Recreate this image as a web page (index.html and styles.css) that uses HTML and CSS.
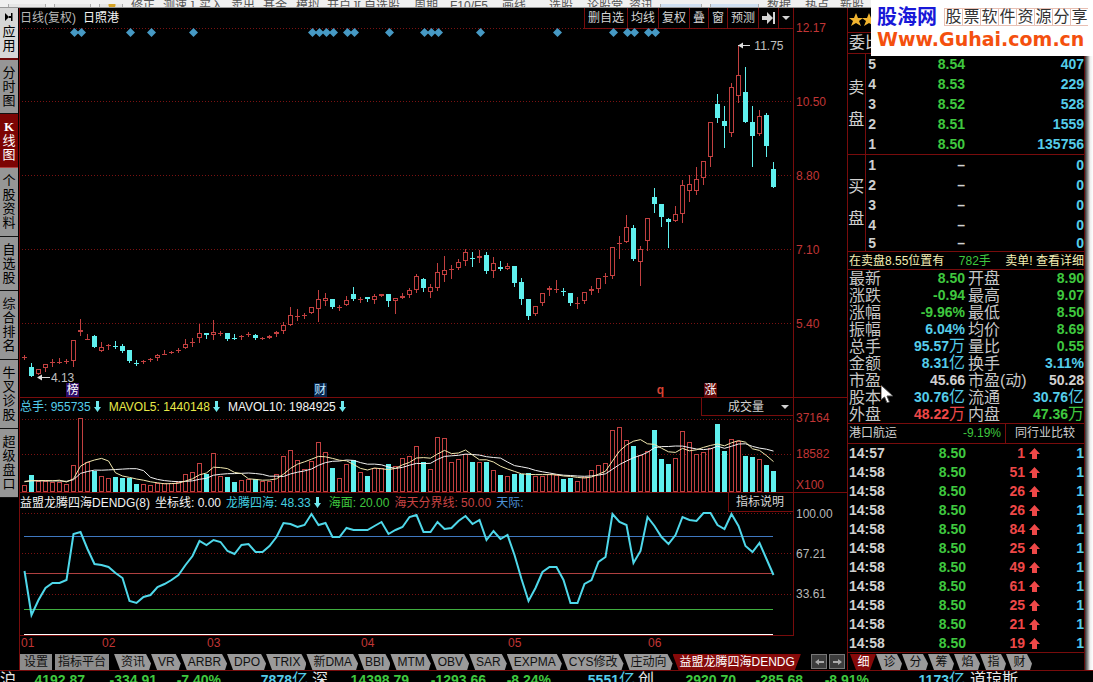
FILE: index.html
```
<!DOCTYPE html>
<html lang="zh-CN">
<head>
<meta charset="utf-8">
<title>日照港 日线</title>
<link rel="stylesheet" href="styles.css">
</head>
<body>
<nav class="toolbar">
  <i class="slot"></i><i class="slot"></i><i class="slot coin"></i>
  <span>修正</span><span>测速</span><b>]</b><span>买入</span><span>卖出</span><span>基金</span><span>模拟</span><span>开户</span><b>][</b>
  <span>自选股</span><span>周期</span><span>F10/F5</span><span>画线</span><span>选股</span><span>论股堂</span><span>资讯</span>
  <i class="slot blue"></i><i class="slot blue"></i><span>数据</span><span>热点</span><span>新股</span>
</nav>

<div class="main">
  <aside class="side">
    <button class="vtab app"><svg width="8" height="8" viewBox="0 0 8 8"><path d="M0 0v8l4-4zM6 0h1.500v8H6zM4 3h2v2H4z"/></svg><span>应用</span></button>
    <button class="vtab"><span>分时图</span></button>
    <button class="vtab on"><span><em>K</em>线图</span></button>
    <button class="vtab tall"><span>个股资料</span></button>
    <button class="vtab"><span>自选股</span></button>
    <button class="vtab tall"><span>综合排名</span></button>
    <button class="vtab tall"><span>牛叉诊股</span></button>
    <button class="vtab tall"><span>超级盘口</span></button>
  </aside>

  <section class="charts">
    <div class="pane">
      <header class="head">
        <span class="gray">日线(复权)</span><span class="white">日照港</span>
        <div class="tools">
          <button>删自选</button><button>均线</button><button>复权</button><button>叠</button><button>窗</button><button>预测</button>
          <button aria-label="下一只"><svg width="13" height="12" viewBox="0 0 13 12"><path d="M0 4h5V0l6 6-6 6V8H0zM11 0h2v12h-2z"/></svg></button>
          <button aria-label="更多"><svg width="8" height="4" viewBox="0 0 8 4"><path d="M0 0h8L4 4z"/></svg></button>
        </div>
      </header>
      <div class="axis"></div>
    </div>
    <div class="pane">
      <div class="plot">
        <svg id="price" class="price" viewBox="20 28 773 369" preserveAspectRatio="none"></svg>
        <span class="note low">4.13</span><span class="note high">11.75</span>
        <span class="pin bang">榜</span><span class="pin cai">财</span><span class="pin q">q</span><span class="pin zhang">涨</span>
      </div>
      <div class="axis red prices"><span>12.17</span><span>10.50</span><span>8.80</span><span>7.10</span><span>5.40</span></div>
    </div>
    <div class="pane line">
      <header class="head vhead">
        <span class="cyan">总手: 955735<svg class="down" width="7" height="11" viewBox="0 0 7 11"><path d="M2 0h3v6h2L3.500 11 0 6h2z"/></svg></span>
        <span class="yellow">MAVOL5: 1440148<svg class="down" width="7" height="11" viewBox="0 0 7 11"><path d="M2 0h3v6h2L3.500 11 0 6h2z"/></svg></span>
        <span class="white">MAVOL10: 1984925<svg class="down" width="7" height="11" viewBox="0 0 7 11"><path d="M2 0h3v6h2L3.500 11 0 6h2z"/></svg></span>
        <label class="pick"><select aria-label="副图指标"><option>成交量</option></select><svg width="8" height="4" viewBox="0 0 8 4"><path d="M0 0h8L4 4z"/></svg></label>
      </header>
      <div class="axis"></div>
    </div>
    <div class="pane">
      <div class="plot"><svg id="volume" class="volume" viewBox="20 416 773 76" preserveAspectRatio="none"></svg></div>
      <div class="axis red vols"><span>37164</span><span>18582</span><span class="unit">X100</span></div>
    </div>
    <div class="pane line">
      <header class="head ihead">
        <span class="white">益盟龙腾四海DENDG(8)</span><span class="white">坐标线: 0.00</span>
        <span class="aqua">龙腾四海: 48.33<svg class="down" width="7" height="11" viewBox="0 0 7 11"><path d="M2 0h3v6h2L3.500 11 0 6h2z"/></svg></span>
        <span class="green">海面: 20.00</span><span class="crimson">海天分界线: 50.00</span><span class="blue">天际:</span>
        <button class="help">指标说明</button>
      </header>
      <div class="axis"></div>
    </div>
    <div class="pane">
      <div class="plot"><svg id="wave" class="wave" viewBox="20 512 773 124" preserveAspectRatio="none"></svg></div>
      <div class="axis silver waves"><span>100.00</span><span>67.21</span><span>33.61</span></div>
    </div>
    <div class="months"><span>01</span><span>02</span><span>03</span><span>04</span><span>05</span><span>06</span></div>
    <nav class="tabs">
      <button class="box">设置</button><button class="box">指标平台</button>
      <button class="tab">资讯</button><button class="tab">VR</button><button class="tab">ARBR</button><button class="tab">DPO</button><button class="tab">TRIX</button><button class="tab">新DMA</button><button class="tab">BBI</button><button class="tab">MTM</button><button class="tab">OBV</button><button class="tab">SAR</button><button class="tab">EXPMA</button><button class="tab">CYS修改</button><button class="tab">庄动向</button><button class="tab on">益盟龙腾四海DENDG</button>
      <button class="arrow" aria-label="向左"><svg width="9" height="6" viewBox="0 0 9 6"><path d="M0 3l4-3v2h5v2H4v2z"/></svg></button>
      <button class="arrow" aria-label="向右"><svg width="9" height="6" viewBox="0 0 9 6"><path d="M9 3L5 0v2H0v2h5v2z"/></svg></button>
    </nav>
  </section>

  <section class="quote">
    <div class="stars">
      <svg width="34" height="14" viewBox="0 0 34 14"><path d="M7 0l2 5h5l-4 3 2 5-5-3-5 3 2-5-4-3h5zM20 0l2 5h5l-4 3 2 5-5-3-5 3 2-5-4-3h5z"/></svg>
    </div>
    <div class="ratio">委比</div>
    <table class="book sell">
      <tr><th rowspan="5">卖<br>盘</th><td>5</td><td class="green">8.54</td><td class="cyan">407</td></tr>
      <tr><td>4</td><td class="green">8.53</td><td class="cyan">229</td></tr>
      <tr><td>3</td><td class="green">8.52</td><td class="cyan">528</td></tr>
      <tr><td>2</td><td class="green">8.51</td><td class="cyan">1559</td></tr>
      <tr><td>1</td><td class="green">8.50</td><td class="cyan">135756</td></tr>
    </table>
    <table class="book buy">
      <tr><th rowspan="5">买<br>盘</th><td>1</td><td>–</td><td class="cyan">0</td></tr>
      <tr><td>2</td><td>–</td><td class="cyan">0</td></tr>
      <tr><td>3</td><td>–</td><td class="cyan">0</td></tr>
      <tr><td>4</td><td>–</td><td class="cyan">0</td></tr>
      <tr><td>5</td><td>–</td><td class="cyan">0</td></tr>
    </table>
    <div class="msg"><span>在卖盘8.55位置有</span><span class="green">782手</span><a href="#detail">卖单! 查看详细</a></div>
    <table class="stats">
      <tr><th>最新</th><td class="green">8.50</td><th>开盘</th><td class="green">8.90</td></tr>
      <tr><th>涨跌</th><td class="green">-0.94</td><th>最高</th><td class="green">9.07</td></tr>
      <tr><th>涨幅</th><td class="green">-9.96%</td><th>最低</th><td class="green">8.50</td></tr>
      <tr><th>振幅</th><td class="cyan">6.04%</td><th>均价</th><td class="green">8.69</td></tr>
      <tr><th>总手</th><td class="cyan">95.57<i>万</i></td><th>量比</th><td class="green">0.55</td></tr>
      <tr><th>金额</th><td class="cyan">8.31<i>亿</i></td><th>换手</th><td class="cyan">3.11%</td></tr>
      <tr><th>市盈</th><td>45.66</td><th>市盈(动)</th><td>50.28</td></tr>
      <tr><th>股本</th><td class="cyan">30.76<i>亿</i></td><th>流通</th><td class="cyan">30.76<i>亿</i></td></tr>
      <tr><th>外盘</th><td class="hot">48.22<i>万</i></td><th>内盘</th><td class="green">47.36<i>万</i></td></tr>
    </table>
    <div class="sector"><span>港口航运</span><span class="green">-9.19%</span><button>同行业比较</button></div>
    <table class="deals" id="deals"></table>
    <nav class="tabs qtabs">
      <button class="tab on">细</button><button class="tab">诊</button><button class="tab">分</button><button class="tab">筹</button><button class="tab">焰</button><button class="tab">指</button><button class="tab">财</button>
    </nav>
  </section>
  <div class="edge"></div>
</div>

<footer class="ticker">
  <span class="name">沪</span><b>4192.87</b><b>-334.91</b><b>-7.40%</b><b class="cyan">7878<i>亿</i></b>
  <span class="name">深</span><b>14398.79</b><b>-1293.66</b><b>-8.24%</b><b class="cyan">5551<i>亿</i></b>
  <span class="name">创</span><b>2920.70</b><b>-285.68</b><b>-8.91%</b><b class="cyan">1173<i>亿</i></b>
  <span class="name">道琼斯</span>
</footer>

<div class="brand">
  <div class="brand-top"><strong>股海网</strong><span class="cells"><i>股</i><i>票</i><i>软</i><i>件</i><i>资</i><i>源</i><i>分</i><i>享</i></span></div>
  <div class="brand-url">Www.Guhai.com.cn</div>
</div>
<svg class="cursor" width="13" height="18" viewBox="0 0 13 18"><path d="M0 0v15l3.500-3 2.500 6 2.500-1L6 11h6z"/></svg>
<script src="charts.js"></script>
</body>
</html>
```
FILE: styles.css
```
* { box-sizing: border-box; }
html { background: #000; }
body {
  margin: 0; height: 100vh; overflow: hidden; position: relative;
  background: #000; color: #d0d0d0;
  font: 12px/14px "Liberation Sans", "Noto Sans CJK SC", sans-serif;
}
button, select { font: inherit; color: inherit; background: none; border: 0; padding: 0; margin: 0; white-space: nowrap; }
i, em { font-style: normal; }
svg { display: block; fill: currentColor; }
table { border-collapse: collapse; width: 100%; }
td, th { padding: 0; font-weight: normal; }

.gray, .silver { color: #b8b8b8; }
.white { color: #f4f4f4; }
.cyan { color: #55cdea; }
.aqua { color: #43cfe0; }
.yellow { color: #e8ea48; }
.green { color: #3fc83f; }
.crimson { color: #c84343; }
.hot { color: #ee4848; }
.blue { color: #4e92d8; }
.red { color: #c23636; }

/* top toolbar, scrolled so that only its lower edge shows */
.toolbar {
  height: 8px; overflow: hidden; background: #f0f0f0; border-bottom: 1px solid #999; color: #555;
  display: grid; align-items: end; padding: 0 0 1px 8px; white-space: nowrap; line-height: 12px;
  grid-template-columns: 46px 45px 32px 32px 28px 8px 32px 32px 33px 31px 27px 10px 50px 36px 52px 47px 38px 42px 31px 50px 57px 38px 35px 1fr;
}
.toolbar b { font-weight: normal; }
.slot { height: 8px; margin-right: 8px; border: 1px solid #aaa; border-top: 0; border-radius: 0 0 2px 2px; background: #e6e6e6; }
.slot.coin { background: radial-gradient(circle at 12px 1px, #d7a526 3px, #e6e6e6 4px); }
.slot.blue { background: #cfe0f2; }

.main { display: grid; grid-template-columns: 19px minmax(0, 1fr) 238px 8px; }

.side { display: flex; flex-direction: column; align-items: flex-start; background: #000; }
.vtab {
  width: 18px; min-height: 54px; border-bottom: 1px solid #111; background: #969696; color: #000;
  display: flex; flex-direction: column; align-items: center; justify-content: center; font-size: 13px; line-height: 14px;
}
.vtab span { width: 13px; word-break: break-all; white-space: normal; }
.vtab.tall { min-height: 69px; }
.vtab.app { min-height: 52px; background: #d6d6d6; border-bottom: 2px solid #6e0808; gap: 4px; }
.vtab.on { background: #7c0404; color: #fff; border-bottom-color: #b04040; }
.vtab em { font: bold 13px/14px "Liberation Serif", serif; display: block; }

.charts { border-left: 1px solid #780c0c; min-width: 0; }
.pane { display: grid; grid-template-columns: minmax(0, 1fr) 54px; }
.pane.line { border-top: 1px solid #780c0c; }
.plot { position: relative; }
.plot > svg { width: 100%; overflow: hidden; }
.price { height: 369px; }
.volume { height: 76px; }
.wave { height: 124px; }
.axis { border-left: 1px solid #780c0c; padding-left: 2px; display: flex; flex-direction: column; }
.head { display: flex; align-items: center; height: 20px; white-space: nowrap; gap: 7px; }
.vhead { height: 18px; gap: 8px; }
.ihead { height: 19px; gap: 5px; }
.down { display: inline-block; margin-left: 3px; color: #6fe9ee; vertical-align: -1px; }
.ihead .down { margin-right: 3px; }
.tools { margin-left: auto; display: flex; height: 21px; align-self: flex-start; border-bottom: 1px solid #780c0c; }
.tools button { border-left: 1px solid #780c0c; padding: 0 3px; color: #d4d4d4; display: flex; align-items: center; }
.pick, .help { margin-left: auto; align-self: stretch; border: 1px solid #780c0c; border-width: 0 0 1px 1px; }
.pick { display: flex; align-items: center; width: 92px; padding-right: 4px; }
.pick select { flex: 1; appearance: none; padding-left: 26px; }
.help { padding: 0 9px 0 7px; color: #d4d4d4; }

.prices { margin-top: -7px; }
.prices span { height: 74px; }
.vols { margin-top: -5px; }
.vols span { height: 36px; }
.vols span:nth-child(2) { height: 31px; }
.vols .unit { height: 14px; }
.waves { margin-top: -5px; }
.waves span { height: 40px; }

.note, .pin { position: absolute; }
.note { color: #c0c0c0; }
.low { left: 4%; bottom: 12px; }
.high { left: 95%; top: 11px; }
.pin { bottom: 0; width: 13px; height: 14px; text-align: center; color: #fff; }
.bang { left: 6%; background: #2c0b68; }
.cai { left: 38%; background: #08264e; color: #bfe6ff; }
.q { left: 82%; color: #d84434; font-weight: bold; }
.zhang { left: 88.5%; background: #5c0606; }

.months { display: grid; grid-template-columns: 81fr 105fr 154fr 147fr 140fr 199fr; padding-left: 1px; height: 17px; color: #c23636; }

.tabs { display: flex; height: 17px; padding-top: 1px; color: #000; }
.box { background: #8c8c8c; padding: 0 3px; margin-right: 3px; height: 16px; color: #111; width: auto; flex: none; }
.box:first-child { padding: 0 4px; }
.box + .tab { margin-left: 2px; }
.tab {
  height: 16px; padding: 0 6px 0 7px; flex: none; background: #9a9a9a; color: #111;
  clip-path: polygon(0 0, calc(100% - 5px) 0, 100% 60%, calc(100% - 2px) 100%, 6px 100%);
}
.tab.on { background: #860a0a; color: #fff; }
.tabs .tab.on { clip-path: polygon(0 0, 100% 0, calc(100% - 6px) 100%, 6px 100%); }
.arrow { width: 16px; height: 15px; border: 1px solid #777; background: #3c3c3c; color: #aaa; display: grid; place-items: center; margin-right: 2px; }
.tab + .arrow { margin-left: auto; }

.quote { border-left: 1px solid #780c0c; border-right: 1px solid #5c0a0a; }
.stars { height: 24px; color: #f2b530; padding: 5px 0 0 1px; }
.ratio { height: 22px; border: 1px solid #780c0c; border-width: 1px 0; font-size: 16px; line-height: 20px; padding-left: 1px; }
.book { border-bottom: 1px solid #780c0c; font-weight: bold; font-size: 14px; line-height: 20px; }
.book th { width: 17px; border-right: 1px solid #780c0c; font-size: 16px; line-height: 32px; }
.book td { font-weight: bold; height: 20px; text-align: right; }
.book td:nth-last-child(3) { width: 11px; text-align: right; }
.book td:nth-last-child(2) { width: 89px; }
.buy { line-height: 19px; }
.buy tr:last-child td { height: 16px; line-height: 16px; }
.msg { display: flex; justify-content: space-between; height: 18px; line-height: 18px; border-bottom: 1px solid #780c0c; color: #f5efb4; padding-left: 1px; white-space: nowrap; }
.msg a { color: inherit; text-decoration: none; }
.stats { line-height: 17px; table-layout: fixed; }
.stats th { font-size: 16px; text-align: left; width: 34px; padding-left: 1px; color: #c6c6c6; white-space: nowrap; }
.stats th:nth-child(3) { width: 60px; padding-left: 3px; }
.stats td { font-size: 14px; font-weight: bold; text-align: right; height: 17px; white-space: nowrap; }
.stats td:nth-child(2) { width: 83px; }
.stats i, .ticker i { font-size: 16px; font-weight: normal; line-height: 1px; }
.sector { display: flex; border: 1px solid #780c0c; border-width: 1px 0; height: 21px; line-height: 19px; padding-left: 1px; }
.sector .green { margin-left: auto; padding-right: 4px; }
.sector button { border-left: 1px solid #780c0c; padding: 0 9px; }
.deals { font-size: 14px; border-bottom: 1px solid #780c0c; }
.deals td { height: 19px; line-height: 19px; font-weight: bold; text-align: right; }
.deals tr:last-child td { height: 18px; line-height: 18px; }
.deals td:first-child { text-align: left; padding-left: 1px; width: 60px; }
.deals td:nth-child(2) { width: 58px; }
.deals td:nth-child(3) { width: 74px; }
.deals svg { display: inline-block; margin-left: 4px; vertical-align: -1px; }
.qtabs { padding-left: 2px; }
.qtabs .tab { width: 26px; }
.edge { background: linear-gradient(90deg, #333, #999 3px, #eee 5px, #fff); }

.ticker {
  border-top: 1px solid #780c0c; height: 24px; padding-top: 1px; font-size: 14px; line-height: 16px; white-space: nowrap; color: #3fc83f;
  display: grid; text-align: right; background: #000;
  grid-template-columns: 14px 71px 72px 64px 87px 20px 81px 77px 65px 84px 19px 82px 67px 66px 96px 1fr;
}
.ticker .name { color: #e8e8e8; font-size: 16px; }
.ticker .name:last-child { text-align: left; padding-left: 5px; }

.brand { position: absolute; top: 0; right: 0; width: 222px; height: 56px; background: #fff; padding: 6px 5px 0 6px; white-space: nowrap; }
.brand-top { display: flex; justify-content: space-between; align-items: center; height: 22px; }
.brand strong { color: #1818d8; font-size: 20px; line-height: 22px; }
.cells { display: flex; color: #333; font-size: 16px; line-height: 18px; }
.cells i { width: 18px; border: 1px solid #e8c0b4; border-right-width: 0; text-align: center; line-height: 16px; height: 18px; }
.brand-url { color: #f4500e; font: bold 19px/22px "DejaVu Sans", sans-serif; }
.cursor { position: absolute; left: 881px; top: 385px; fill: #fff; stroke: #444; }
```
FILE: charts.js
```
// One entry per day: colour, high, body top, body bottom, low.
const days = `r355 357 357 359|c363 367 376 376|r369 369 374 374|r364 364 368 371|r359 362 362 366|r358 362 362 363|r359 361 361 363|r340 340 361 366|r319 330 332 335|r334 339 339 339|c335 336 347 347|r342 347 351 351|r344 345 345 349|c341 346 346 348|c344 346 351 352|c350 350 361 362|c360 363 363 365|r360 361 361 363|r358 359 359 361|r354 355 358 360|r350 354 354 354|r351 352 352 353|r348 350 350 352|r339 344 348 348|r338 342 342 346|r324 333 338 342|c333 333 335 338|r320 332 335 339|r331 333 333 335|c333 333 339 340|c334 338 338 339|r335 336 336 339|r332 334 334 336|c334 335 338 339|r337 338 338 339|r335 336 338 338|r331 332 334 336|r322 325 331 333|r307 315 325 325|r309 316 316 320|r313 315 315 318|r307 307 313 313|r290 299 309 321|r293 298 301 305|c299 299 307 308|r305 307 307 310|r296 300 305 305|c287 294 299 300|r297 299 299 302|c297 297 299 301|r294 296 300 303|r294 294 296 296|c294 294 301 306|r298 298 301 313|r293 296 298 298|r288 290 295 297|r274 276 290 292|c278 279 288 291|r284 287 292 297|r263 272 288 290|r256 270 275 281|r265 269 269 278|r259 262 268 269|r249 252 261 265|c252 258 258 266|r250 256 258 262|c252 255 271 273|r257 263 271 277|c261 267 269 270|r263 266 269 269|c266 266 283 286|c278 282 299 304|c299 299 316 319|r306 306 314 315|r293 293 303 305|r286 288 290 295|r280 289 289 292|c288 291 291 295|c293 293 303 305|r297 303 303 308|r292 292 301 303|r286 289 291 294|r278 278 289 292|r273 276 276 283|r247 247 276 278|r236 243 243 258|r215 227 242 242|c225 228 259 260|r246 249 262 285|r218 218 241 250|c188 197 204 212|c204 204 217 226|c218 219 222 247|r206 214 221 221|r180 185 214 222|r175 184 191 201|r167 179 191 194|r161 161 178 184|r122 122 157 166|c94 104 118 122|c106 121 126 147|r83 87 133 136|r46 75 96 102|c67 92 122 122|c106 122 136 166|r110 116 134 135|c113 115 146 156|c162 169 187 187`
  .split('|').map(s => [s[0], ...s.slice(1).split(' ').map(Number)]);

const volumeTops = [485,475,481,481,482,482,484,465,418,462,471,476,478,477,478,478,484,484,485,483,483,483,482,474,472,463,474,453,476,477,482,480,479,479,481,481,474,456,450,460,469,461,442,452,468,478,464,460,472,476,468,468,464,466,458,456,446,462,469,437,438,462,459,454,462,462,462,470,475,476,474,474,473,476,476,474,475,479,478,481,477,470,465,463,430,427,440,446,455,451,430,459,464,458,431,442,454,452,448,424,451,439,441,456,457,459,465,471];

const wave = [571,615,600,588,583,583,580,534,532,549,564,565,567,573,578,601,603,597,595,587,584,580,575,565,556,541,545,540,542,551,554,545,544,552,552,546,537,523,524,527,525,514,525,523,537,537,528,530,530,530,526,522,534,530,527,517,515,532,532,522,529,528,521,516,524,520,540,531,539,535,555,579,601,588,572,567,567,580,603,603,584,580,562,557,514,522,525,563,551,517,526,537,544,535,517,520,521,513,513,525,529,514,526,546,552,543,559,575];

const RED = '#c24040', CYAN = '#5ff0ee';
const x = i => 24 + 7 * i;
const rect = (a, b, w, h, fill) => `<rect x="${a}" y="${b}" width="${w}" height="${h}" fill="${fill}"/>`;
const grid = ys => ys.map(y => `<path d="M22 ${y + .5}H793" stroke="#7a1212" stroke-dasharray="1 2"/>`).join('');
const hollow = (a, b, h, c) => `<rect x="${a + .5}" y="${b + .5}" width="4" height="${Math.max(h - 1, 0)}" fill="#000" stroke="${c}"/>`;

let out = grid([28, 101, 175, 249, 323]);
for (const d of [74,81,130,151,193,312,319,326,333,347,354,389,424,431,438,480,557,613,627,634,648,655])
  out += `<path d="M${d - 4} 32.500l4.500-4.500 4.500 4.500-4.500 4.500z" fill="#4699c4"/>`;
days.forEach(([c, hi, top, bot, lo], i) => {
  const color = c === 'r' ? RED : CYAN;
  out += rect(x(i), hi, 1, lo - hi + 1, color);
  if (top === bot) out += rect(x(i) - 2, top, 5, 1, color);
  else if (c === 'r') out += hollow(x(i) - 2, top, bot - top, color);
  else out += rect(x(i) - 2, top, 5, bot - top, color);
});
out += '<path d="M38 377.500h12M738 45.500h12" stroke="#ddd"/><path d="M37 377.500l5-3v6zM738 45.500l5-3v6z" fill="#ddd"/>';
document.getElementById('price').innerHTML = out;

const average = n => volumeTops.map((_, i) => {
  let sum = 0;
  for (let k = 0; k < n; k++) sum += i - k < 0 ? 481 : volumeTops[i - k];
  return sum / n;
});
const line = (ys, color, width) => `<polyline points="${ys.map((y, i) => `${x(i) + .5},${y}`).join(' ')}" fill="none" stroke="${color}" stroke-width="${width}"/>`;
out = grid([419, 454]);
volumeTops.forEach((t, i) => {
  out += days[i][0] === 'r' ? hollow(x(i) - 2, t, 492 - t, RED) : rect(x(i) - 2, t, 5, 492 - t, CYAN);
});
document.getElementById('volume').innerHTML = out + line(average(10), '#f2f2f2', 1) + line(average(5), '#f2e9b0', 1);

const level = (y, color) => `<path d="M24 ${y}.5H773" stroke="${color}"/>`;
out = grid([513, 553, 594]) + '<path d="M20 635.500H793" stroke="#780c0c"/>';
out += level(536, '#3f78c0') + level(573, '#b04040') + level(609, '#3fae3f') + level(634, '#fff') + line(wave, '#4fd8ea', 2);
document.getElementById('wave').innerHTML = out;

const deals = [['14:57', 1], ['14:58', 51], ['14:58', 26], ['14:58', 26], ['14:58', 84], ['14:58', 25], ['14:58', 49], ['14:58', 61], ['14:58', 25], ['14:58', 21], ['14:58', 19]];
document.getElementById('deals').innerHTML = deals.map(([t, n]) =>
  `<tr><td>${t}</td><td class="green">8.50</td><td class="hot">${n}<svg width="11" height="11" viewBox="0 0 11 11"><path d="M5.500 0L11 6H8v5H3V6H0z"/></svg></td><td class="cyan">1</td></tr>`).join('');
```
